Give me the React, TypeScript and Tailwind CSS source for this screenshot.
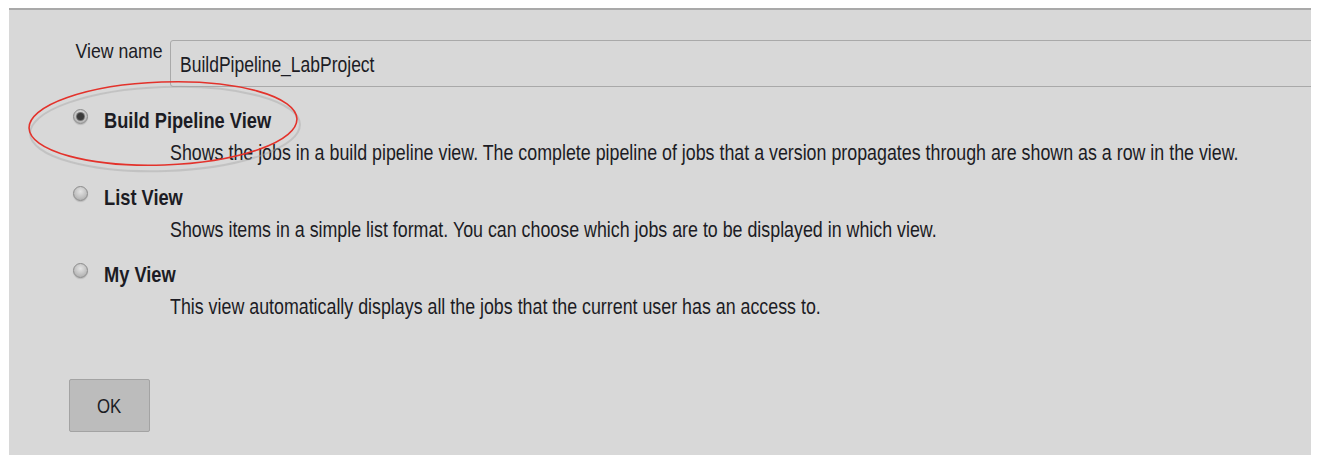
import React from "react";

const font = { fontFamily: '"Liberation Sans", Arial, sans-serif' };

function Radio({ checked }: { checked?: boolean }) {
  return (
    <span className="mt-[4px] inline-flex h-[15px] w-[15px] shrink-0 items-center justify-center rounded-full border border-[#8c8c8c] bg-[radial-gradient(circle_at_50%_35%,#e4e4e4,#c2c2c2_55%,#a4a4a4)] shadow-[0_1px_1px_rgba(0,0,0,0.15)]">
      {checked && <span className="h-[7px] w-[7px] rounded-full bg-[#3a3a3a] shadow-[0_0_0_1px_#727272]" />}
    </span>
  );
}

function Option({ label, desc, checked }: { label: string; desc: string; checked?: boolean }) {
  return (
    <div className="flex flex-col">
      <div className="flex items-start">
        <div className="flex w-[95px] shrink-0 pl-[64px]">
          <Radio checked={checked} />
        </div>
        <span className="inline-block origin-left scale-x-[0.83] whitespace-nowrap text-[22px] font-bold leading-[32px] text-[#1c1c24]">
          {label}
        </span>
      </div>
      <div className="pl-[161px] leading-[32px]">
        <span className="inline-block origin-left scale-x-[0.81] whitespace-nowrap text-[22px] leading-[32px] text-[#1c1c24]">
          {desc}
        </span>
      </div>
    </div>
  );
}

export default function App() {
  return (
    <div className="h-[466px] w-[1320px] overflow-hidden bg-white pt-[8px] pl-[9px]" style={font}>
      <div className="relative h-[447px] w-[1302px] overflow-hidden border-t-2 border-[#a9a9a9] bg-[#d8d8d8]">
        <div className="flex items-start pt-[30px]">
          <div className="w-[161px] shrink-0 pr-[7px] text-right">
            <span className="inline-block origin-right scale-x-[0.84] whitespace-nowrap text-[21px] leading-[22px] text-[#1c1c24]">
              View name
            </span>
          </div>
          <div className="h-[47px] w-[1200px] shrink-0 rounded-l-[3px] border border-[#a9a9a9] pl-[9px] pt-[2px]">
            <span className="inline-block origin-left scale-x-[0.795] whitespace-nowrap text-[22px] leading-[43px] text-[#1c1c24]">
              BuildPipeline_LabProject
            </span>
          </div>
        </div>
        <div className="mt-[18px] flex flex-col gap-[11px]">
          <Option
            checked
            label="Build Pipeline View"
            desc="Shows the jobs in a build pipeline view. The complete pipeline of jobs that a version propagates through are shown as a row in the view."
          />
          <Option
            label="List View"
            desc="Shows items in a simple list format. You can choose which jobs are to be displayed in which view."
          />
          <Option
            label="My View"
            desc="This view automatically displays all the jobs that the current user has an access to."
          />
        </div>
        <div className="pl-[60px] pt-[54px]">
          <button className="flex h-[53px] w-[81px] items-center justify-center rounded-[2px] border border-[#a3a3a3] bg-[#bcbcbc]">
            <span className="inline-block scale-x-[0.8] text-[21px] leading-[24px] text-[#1c1c24]">OK</span>
          </button>
        </div>
        <svg className="pointer-events-none absolute left-0 top-0" width="1302" height="447">
          <ellipse cx="155" cy="116" rx="135" ry="42" fill="none" stroke="#a8a8a8" strokeWidth="2" opacity="0.45" transform="translate(1 3) rotate(-2 155 116)" />
          <ellipse cx="154" cy="113.5" rx="134" ry="41.5" fill="none" stroke="#e3322b" strokeWidth="1.6" transform="rotate(-2 154 113.5)" />
        </svg>
      </div>
    </div>
  );
}
